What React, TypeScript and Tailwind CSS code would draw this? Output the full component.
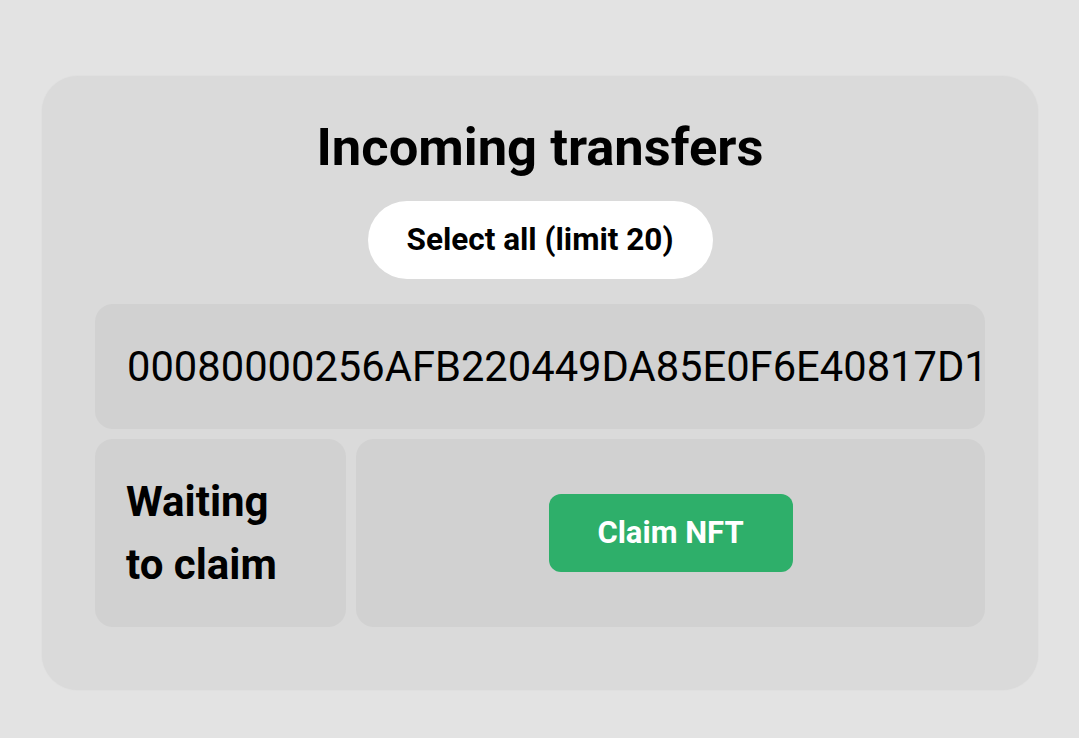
export default function App() {
  return (
    <div
      className="min-h-[738px] w-full bg-[#e3e3e3] pt-[76px] pl-[42px]"
      style={{ fontFamily: "Roboto, 'Noto Sans', sans-serif" }}
    >
      <div className="w-[996px] rounded-[36px] bg-[#dadada] px-[53px] pt-[40px] pb-[63px] shadow-[0_0_2px_rgba(0,0,0,0.06)]">
        <h1 className="text-center text-[52.5px] font-bold leading-[63px] text-black">
          Incoming transfers
        </h1>
        <div className="mt-[22px] flex justify-center">
          <button className="flex h-[78px] w-[345px] items-center justify-center rounded-full bg-white text-[31.5px] font-bold text-black">
            Select all (limit 20)
          </button>
        </div>
        <div className="mt-[25px] flex h-[125px] items-center rounded-[18px] bg-[#d1d1d1] pl-[32px]">
          <span className="whitespace-nowrap text-[41.7px] leading-none text-black">
            00080000256AFB220449DA85E0F6E40817D1
          </span>
        </div>
        <div className="mt-[10px] flex h-[188px] gap-[10px]">
          <div className="flex w-[251px] items-center rounded-[18px] bg-[#d1d1d1] pl-[31px]">
            <span className="text-[42px] font-bold leading-[63px] text-black">
              Waiting
              <br />
              to claim
            </span>
          </div>
          <div className="flex flex-1 items-center justify-center rounded-[18px] bg-[#d1d1d1]">
            <button className="flex h-[78px] w-[244px] items-center justify-center rounded-[12px] bg-[#2eaf6a] text-[31px] font-bold text-white">
              Claim NFT
            </button>
          </div>
        </div>
      </div>
    </div>
  );
}
